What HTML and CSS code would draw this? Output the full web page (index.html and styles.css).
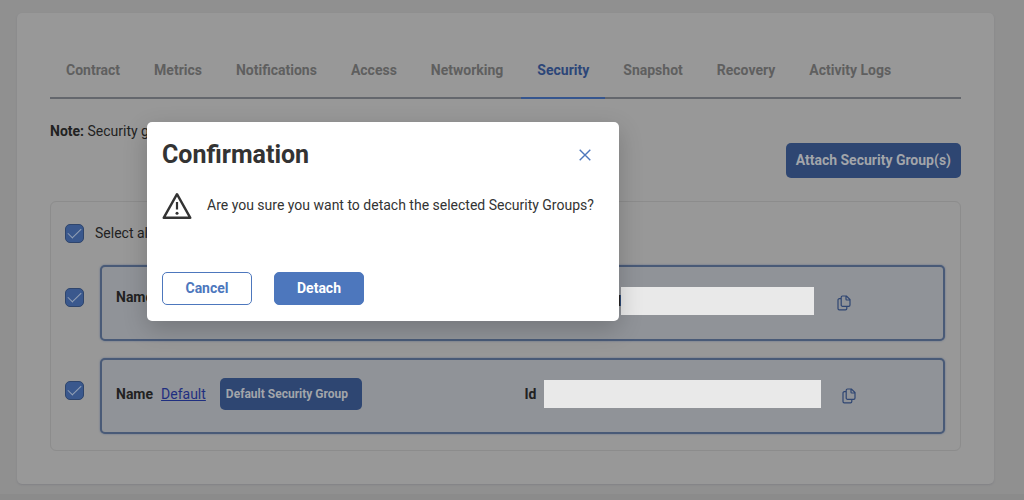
FILE: index.html
```html
<!DOCTYPE html>
<html lang="en">
<head>
    <meta charset="UTF-8">
    <meta name="viewport" content="width=device-width, initial-scale=1.0">
    <title>Security Groups</title>
    <link rel="stylesheet" href="styles.css">
</head>
<body>
    <main class="panel">
        <nav class="tabs">
            <a href="#contract">Contract</a>
            <a href="#metrics">Metrics</a>
            <a href="#notifications">Notifications</a>
            <a href="#access">Access</a>
            <a href="#networking">Networking</a>
            <a href="#security" class="active">Security</a>
            <a href="#snapshot">Snapshot</a>
            <a href="#recovery">Recovery</a>
            <a href="#logs">Activity Logs</a>
        </nav>
        <p class="note"><b>Note:</b> Security groups</p>
        <div class="actions">
            <button type="button" class="attach">Attach Security Group(s)</button>
        </div>
        <section class="groups">
            <div class="select-all">
                <input type="checkbox" id="select-all" checked>
                <label for="select-all">Select all</label>
            </div>
            <div class="group-row">
                <input type="checkbox" aria-label="Select first group" checked>
                <div class="group-card wide-name">
                    <div class="group-name"><b>Name</b></div>
                    <div class="group-id">
                        <b>Id</b>
                        <span class="id-value short"></span>
                        <button type="button" class="copy" aria-label="Copy id">
                            <svg width="14" height="16" viewBox="0 0 14 16"><path d="M5.5 1h4L13 4.500V10a1.300 1.300 0 0 1-1.300 1.300H5.500A1.300 1.300 0 0 1 4.200 10V2.300A1.300 1.300 0 0 1 5.500 1zM9 1v3.200a.8.8 0 0 0 .8.8H13M4.200 3.700H2.300A1.300 1.300 0 0 0 1 5v8.500a1.300 1.300 0 0 0 1.300 1.300h6.200a1.300 1.300 0 0 0 1.300-1.300v-2.200"/></svg>
                        </button>
                    </div>
                </div>
            </div>
            <div class="group-row">
                <input type="checkbox" aria-label="Select Default group" checked>
                <div class="group-card">
                    <div class="group-name">
                        <b>Name</b>
                        <a href="#default">Default</a>
                        <span class="tag">Default Security Group</span>
                    </div>
                    <div class="group-id">
                        <b>Id</b>
                        <span class="id-value"></span>
                        <button type="button" class="copy" aria-label="Copy id">
                            <svg width="14" height="16" viewBox="0 0 14 16"><path d="M5.5 1h4L13 4.500V10a1.300 1.300 0 0 1-1.300 1.300H5.500A1.300 1.300 0 0 1 4.200 10V2.300A1.300 1.300 0 0 1 5.500 1zM9 1v3.200a.8.8 0 0 0 .8.8H13M4.200 3.700H2.300A1.300 1.300 0 0 0 1 5v8.500a1.300 1.300 0 0 0 1.300 1.300h6.200a1.300 1.300 0 0 0 1.300-1.300v-2.200"/></svg>
                        </button>
                    </div>
                </div>
            </div>
        </section>
    </main>
    <footer class="bottom-bar"></footer>

    <div class="modal" role="dialog" aria-labelledby="modal-title">
        <div class="modal-header">
            <h2 id="modal-title">Confirmation</h2>
            <button type="button" class="close" aria-label="Close">
                <svg width="12" height="12" viewBox="0 0 12 12"><path d="M.7.7l10.600 10.600M11.300.7L.7 11.300"/></svg>
            </button>
        </div>
        <div class="modal-body">
            <svg width="30" height="28" viewBox="0 0 30 28"><path d="M15 2.200L28.300 25.800H1.700z" fill="none" stroke="#333" stroke-width="2.400" stroke-linejoin="round"/><path d="M15 10v7.500" stroke="#333" stroke-width="2.200"/><circle cx="15" cy="21.200" r="1.500" fill="#333"/></svg>
            <p>Are you sure you want to detach the selected Security Groups?</p>
        </div>
        <div class="modal-buttons">
            <button type="button" class="cancel">Cancel</button>
            <button type="button" class="detach">Detach</button>
        </div>
    </div>
</body>
</html>
```
FILE: styles.css
```css
* {
    box-sizing: border-box;
}
body {
    display: flex;
    flex-direction: column;
    min-height: 100vh;
    margin: 0;
    background-color: #909090;
    color: #222222;
    font-family: Roboto, "Liberation Sans", sans-serif;
    font-size: 14px;
    line-height: 20px;
}
button {
    font-family: inherit;
    font-size: 14px;
    font-weight: bold;
    line-height: 20px;
    border: none;
    border-radius: 5px;
    cursor: pointer;
}
p, h2 {
    margin: 0;
}
.panel {
    margin: 13px 30px 10px 17px;
    padding: 40px 33px 33px;
    background-color: #989898;
    border-radius: 5px;
    box-shadow: 0 1px 2px #828286;
}
.tabs {
    display: flex;
    gap: 2px;
    border-bottom: 2px solid #64676d;
}
.tabs a {
    margin-bottom: -2px;
    padding: 7px 16px 17px;
    color: #5f5f5f;
    font-weight: bold;
    text-decoration: none;
    border-bottom: 2px solid transparent;
}
.tabs .active {
    color: #2c4678;
    border-bottom-color: #35558e;
}
.note {
    padding-top: 22px;
}
.actions {
    display: flex;
    justify-content: flex-end;
    padding: 2px 0 23px;
}
.attach {
    height: 35px;
    padding: 0 10px 2px;
    background-color: #2e4672;
    color: #a2a5aa;
}
.groups {
    padding: 14px 15px 16px 14px;
    border: 1px solid #8c8c8c;
    border-radius: 6px;
}
.select-all {
    display: flex;
    align-items: center;
    gap: 11px;
    height: 34px;
    margin-bottom: 15px;
}
.group-row {
    display: flex;
    gap: 16px;
}
.group-row + .group-row {
    margin-top: 17px;
}
input[type="checkbox"] {
    appearance: none;
    display: flex;
    justify-content: center;
    flex-shrink: 0;
    width: 19px;
    height: 19px;
    margin: 0;
    background-color: #3a588d;
    border: 1px solid #2f456c;
    border-radius: 5px;
}
.group-row input[type="checkbox"] {
    margin-top: 23px;
}
input[type="checkbox"]:checked::before {
    content: "";
    width: 6px;
    height: 12px;
    border: solid #93a0b5;
    border-width: 0 1px 1px 0;
    transform: rotate(45deg);
}
.group-card {
    display: grid;
    grid-template-columns: 101fr 100fr;
    align-items: center;
    flex: 1;
    height: 76px;
    padding: 0 14px;
    background-color: #909398;
    border: 2px solid #495a77;
    border-radius: 5px;
    box-shadow: 0 0 2px #5c6c88;
}
.wide-name {
    grid-template-columns: 607fr 393fr;
}
.group-name, .group-id {
    display: flex;
    align-items: center;
}
.group-name {
    gap: 8px;
    padding-bottom: 4px;
}
.wide-name .group-name {
    padding-bottom: 12px;
}
.group-name a {
    color: #1f2f80;
}
.tag {
    margin-left: 6px;
    padding: 6px 14px 6px 6px;
    background-color: #2e4672;
    color: #a2a5aa;
    font-size: 12px;
    font-weight: bold;
    border-radius: 5px;
}
.group-id {
    gap: 7px;
    padding-bottom: 4px;
}
.wide-name .group-id {
    gap: 0;
}
.id-value {
    width: 277px;
    height: 28px;
    background-color: #e9e9e9;
}
.short {
    width: 193px;
}
.copy {
    display: flex;
    margin-left: 14px;
    padding: 3px 0 0;
    background: none;
}
.wide-name .copy {
    margin-left: 23px;
}
.copy svg {
    fill: none;
    stroke: #2f4672;
    stroke-width: 1.2;
}
.bottom-bar {
    flex: 1;
    background-color: #8b8b8b;
}
/* dialog over the page */
.modal {
    position: absolute;
    top: 122px;
    left: 147px;
    width: 472px;
    padding: 17px 15px 16px;
    background-color: #ffffff;
    color: #333333;
    border-radius: 5px;
    box-shadow: 0 8px 24px rgba(0, 0, 0, 0.2);
}
.modal-header {
    display: flex;
    justify-content: space-between;
    align-items: center;
}
.modal-header h2 {
    font-size: 25px;
    line-height: 32px;
}
.close {
    display: flex;
    margin-right: 13px;
    padding: 0;
    background: none;
}
.close svg {
    stroke: #4d77bd;
    stroke-width: 1.4;
}
.modal-body {
    display: flex;
    gap: 15px;
    padding: 21px 0 52px;
}
.modal-body p {
    padding-top: 3px;
}
.modal-buttons {
    display: flex;
    gap: 22px;
}
.cancel, .detach {
    width: 90px;
    height: 33px;
    padding-bottom: 3px;
    border: 1px solid #4d77bd;
}
.cancel {
    background-color: #ffffff;
    color: #4d77bd;
}
.detach {
    background-color: #4d77bd;
    color: #ffffff;
}
```
